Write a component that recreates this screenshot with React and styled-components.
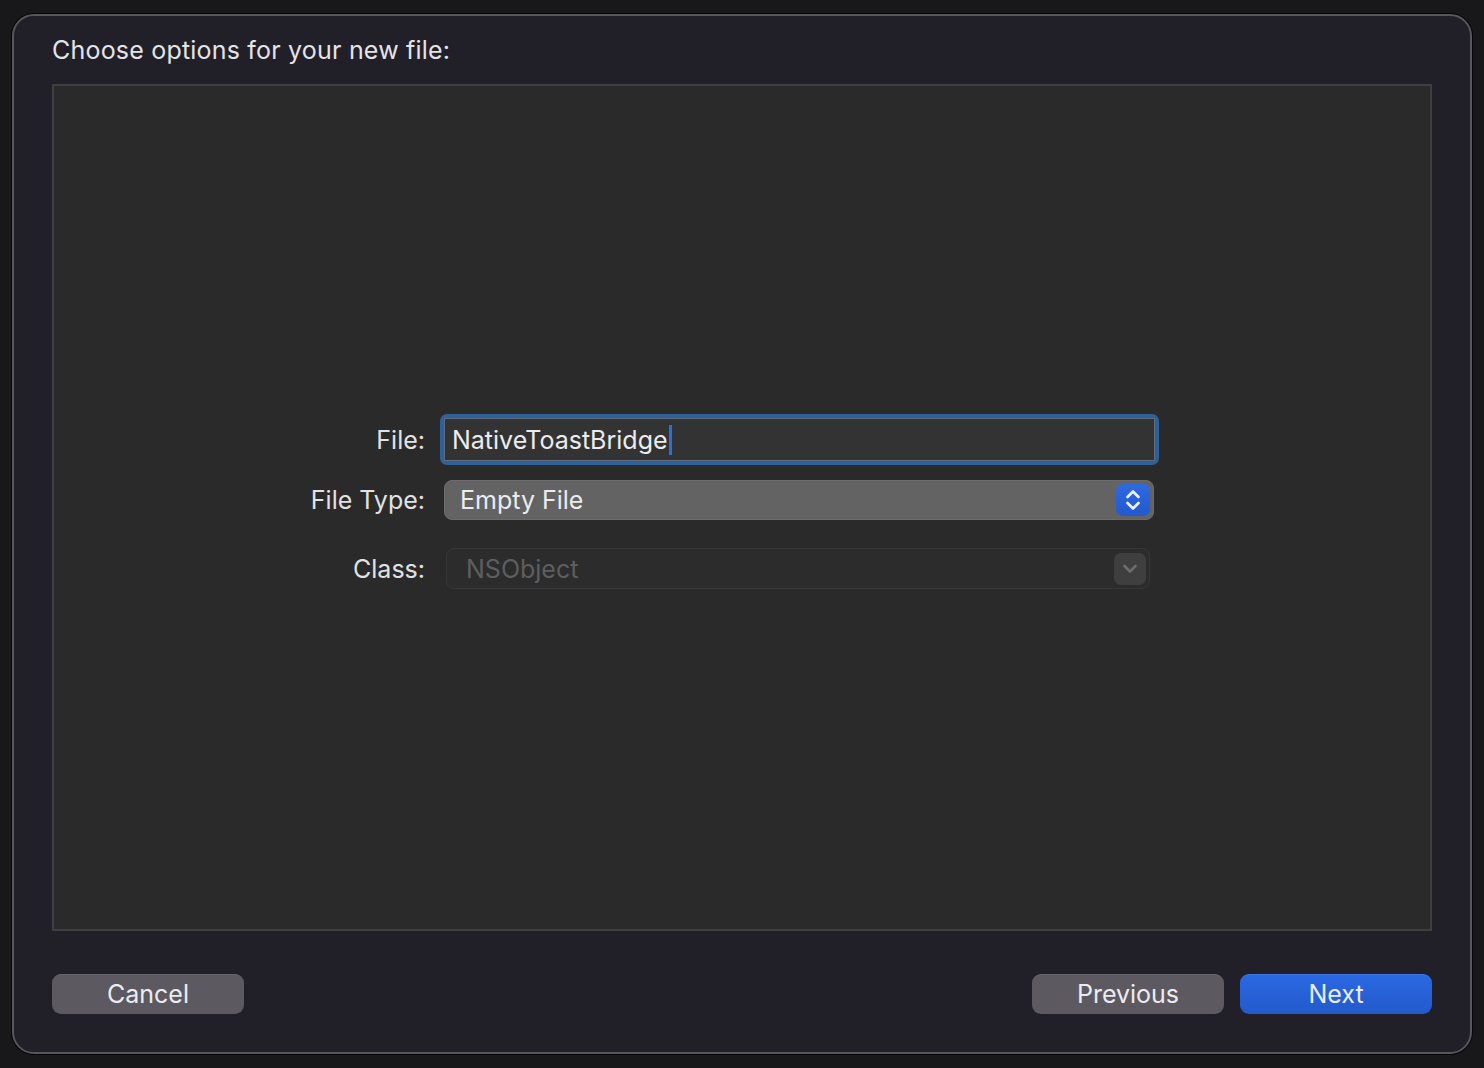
import React from "react";
import styled, { createGlobalStyle } from "styled-components";

const GlobalStyle = createGlobalStyle`
  html, body {
    margin: 0;
    padding: 0;
    background: #18181a;
    font-family: Inter, "Noto Sans", "Liberation Sans", sans-serif;
    -webkit-font-smoothing: antialiased;
  }
`;

const Backdrop = styled.div`
  width: 1484px;
  height: 1068px;
  box-sizing: border-box;
  padding: 14px 12px;
  background: #18181a;
  overflow: hidden;
`;

const Sheet = styled.div`
  box-sizing: border-box;
  width: 1460px;
  height: 1040px;
  background: #211f28;
  border: 2px solid #58565c;
  box-shadow: 0 0 0 1px #050505;
  border-radius: 22px;
  padding: 18px 38px 37px 38px;
  display: flex;
  flex-direction: column;
`;

const Title = styled.div`
  color: #e4e4e6;
  font-size: 25px;
  letter-spacing: 0.2px;
  line-height: 32px;
  height: 50px;
`;

const Panel = styled.div`
  box-sizing: border-box;
  height: 847px;
  background: #2a2a2a;
  border: 2px solid #3f3f40;
  padding-top: 328px;
  display: flex;
  flex-direction: column;
`;

const Row = styled.div`
  display: flex;
  align-items: center;
  height: ${(p) => p.$height}px;
  margin-bottom: ${(p) => p.$below || 0}px;
`;

const Label = styled.div`
  box-sizing: border-box;
  width: 386px;
  padding-right: 15px;
  text-align: right;
  color: #e2e2e4;
  font-size: 25px;
`;

const FocusRing = styled.div`
  box-sizing: border-box;
  width: 719px;
  height: 51px;
  border: 4px solid #2f6197;
  border-radius: 7px;
`;

const TextInput = styled.div`
  box-sizing: border-box;
  height: 100%;
  background: #333333;
  border: 1px solid #5c6b7e;
  display: flex;
  align-items: center;
  padding-left: 7px;
  color: #ececee;
  font-size: 25px;
`;

const Caret = styled.span`
  display: inline-block;
  width: 3px;
  height: 30px;
  margin-left: 1px;
  background: #2a6fdc;
`;

const Popup = styled.div`
  box-sizing: border-box;
  width: ${(p) => p.$width}px;
  height: 100%;
  margin-left: ${(p) => p.$inset}px;
  border-radius: 8px;
  background: ${(p) => (p.$disabled ? "#2c2c2c" : "#636363")};
  border: 1px solid ${(p) => (p.$disabled ? "#373737" : "#6c6c6c")};
  display: flex;
  align-items: center;
  justify-content: space-between;
  padding: 0 3px 0 ${(p) => (p.$disabled ? 19 : 15)}px;
  color: ${(p) => (p.$disabled ? "#5e5e60" : "#ececee")};
  font-size: 25px;
`;

const Stepper = styled.div`
  width: ${(p) => p.$w}px;
  height: 32px;
  border-radius: 7px;
  background: ${(p) => (p.$blue ? "linear-gradient(#2d6ae0, #2459cf)" : "#3f3f3f")};
  display: flex;
  align-items: center;
  justify-content: center;
`;

const Footer = styled.div`
  display: flex;
  align-items: center;
  margin-top: 43px;
  gap: 16px;
`;

const Spacer = styled.div`
  flex: 1;
`;

const Button = styled.div`
  width: 192px;
  height: 40px;
  box-sizing: border-box;
  border-radius: 9px;
  display: flex;
  align-items: center;
  justify-content: center;
  padding-bottom: 2px;
  font-size: 25px;
  color: #ececf0;
  background: ${(p) => (p.$primary ? "linear-gradient(#2a69e2, #2359cc)" : "#5c5a60")};
  border-top: 1px solid ${(p) => (p.$primary ? "#3a78ea" : "#67656b")};
`;

const UpDown = () => (
  <svg width="18" height="26" viewBox="0 0 18 26">
    <path d="M3.5 10 L9 4.5 L14.5 10" fill="none" stroke="#eef2ff" strokeWidth="2.6" strokeLinecap="round" strokeLinejoin="round" />
    <path d="M3.5 16 L9 21.5 L14.5 16" fill="none" stroke="#eef2ff" strokeWidth="2.6" strokeLinecap="round" strokeLinejoin="round" />
  </svg>
);

const Chevron = () => (
  <svg width="18" height="12" viewBox="0 0 18 12">
    <path d="M3.5 3 L9 8.5 L14.5 3" fill="none" stroke="#6c6c6c" strokeWidth="2.6" strokeLinecap="round" strokeLinejoin="round" />
  </svg>
);

export default function App() {
  return (
    <>
      <GlobalStyle />
      <Backdrop>
        <Sheet>
          <Title>Choose options for your new file:</Title>
          <Panel>
            <Row $height={51} $below={15}>
              <Label>File:</Label>
              <FocusRing>
                <TextInput>
                  NativeToastBridge
                  <Caret />
                </TextInput>
              </FocusRing>
            </Row>

            <Row $height={40} $below={28}>
              <Label>File Type:</Label>
              <Popup $width={710} $inset={4}>
                Empty File
                <Stepper $w={34} $blue>
                  <UpDown />
                </Stepper>
              </Popup>
            </Row>

            <Row $height={41}>
              <Label>Class:</Label>
              <Popup $width={704} $inset={6} $disabled>
                NSObject
                <Stepper $w={32}>
                  <Chevron />
                </Stepper>
              </Popup>
            </Row>
          </Panel>
          <Footer>
            <Button>Cancel</Button>
            <Spacer />
            <Button>Previous</Button>
            <Button $primary>Next</Button>
          </Footer>
        </Sheet>
      </Backdrop>
    </>
  );
}
